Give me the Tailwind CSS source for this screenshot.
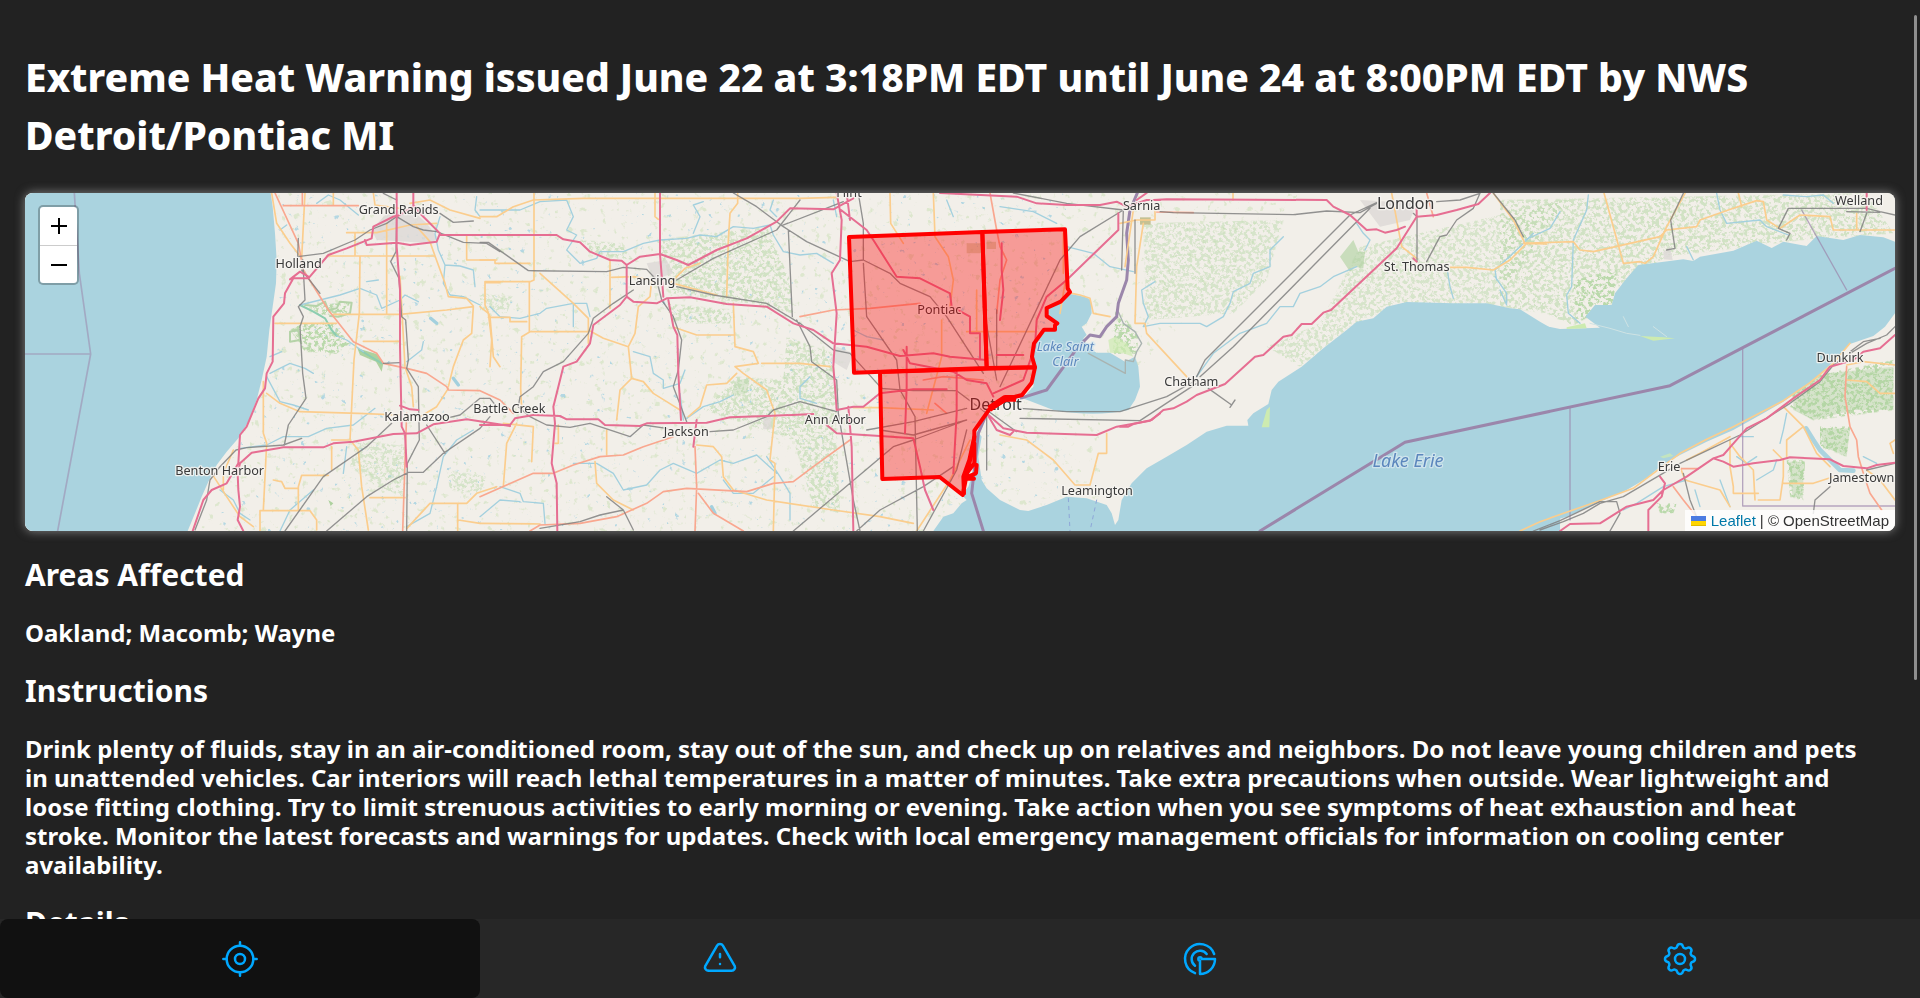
<!DOCTYPE html>
<html lang="en">
<head>
<meta charset="utf-8">
<meta name="viewport" content="width=device-width, initial-scale=1">
<title>Extreme Heat Warning</title>
<script src="https://cdn.jsdelivr.net/npm/@tailwindcss/browser@4"></script>
</head>
<body class="bg-[#222222] text-white font-['Noto_Sans',sans-serif]">
<div class="relative flex h-screen flex-col overflow-hidden">

<main class="min-h-0 flex-1 overflow-y-auto px-[25px] pt-12 [scrollbar-width:none]">
  <h1 class="text-[39px] leading-[58px] font-extrabold">Extreme Heat Warning issued June 22 at 3:18PM EDT until June 24 at 8:00PM EDT by NWS Detroit/Pontiac MI</h1>

  <section aria-label="Warning area map" class="relative mt-[29px] h-[338px] overflow-hidden rounded-lg bg-[#f2efe9] shadow-[0_0_10px_1px_#777777]">
    <svg class="block h-full w-full" viewBox="75 39 5610 1014" preserveAspectRatio="xMidYMid slice" fill="none" stroke-linejoin="round" stroke-linecap="round" role="img" aria-label="Oakland, Macomb and Wayne counties">
      <defs>
        <filter id="woods" x="0" y="0" width="1" height="1" color-interpolation-filters="sRGB">
          <feTurbulence type="fractalNoise" baseFrequency=".09" numOctaves="3" seed="7"/>
          <feColorMatrix values="0 0 0 0 .73  0 0 0 0 .85  0 0 0 0 .67  7 0 0 0 -3.2"/>
          <feComposite in2="SourceGraphic" operator="in"/>
        </filter>
        <filter id="ponds" x="0" y="0" width="1" height="1" color-interpolation-filters="sRGB">
          <feTurbulence type="fractalNoise" baseFrequency=".05" numOctaves="3" seed="21"/>
          <feColorMatrix values="0 0 0 0 .64  0 0 0 0 .82  0 0 0 0 .88  10 0 0 0 -7.3"/>
          <feComposite in2="SourceGraphic" operator="in"/>
        </filter>
        <filter id="meadow" x="0" y="0" width="1" height="1" color-interpolation-filters="sRGB">
          <feTurbulence type="fractalNoise" baseFrequency=".05" numOctaves="3" seed="3"/>
          <feColorMatrix values="0 0 0 0 .8  0 0 0 0 .88  0 0 0 0 .72  8 0 0 0 -5.2"/>
          <feComposite in2="SourceGraphic" operator="in"/>
        </filter>
      </defs>
      <path fill="#f2efe9" d="M75 39H5685V1053H75z"/>

      <!-- vegetation and small lakes -->
      <g filter="url(#meadow)"><path fill="#000" fill-opacity=".55" d="M830 39H3900L3300 700 3300 1053H600L830 500z"/></g>
      <g filter="url(#ponds)"><path fill="#000" fill-opacity=".8" d="M830 39H3200V1053H600L830 500z"/></g>
      <g filter="url(#woods)" fill="#000">
        <path opacity=".6" d="M1970 180 2300 140 2370 300 2380 400 2250 370 2020 340zM2000 370 2200 390 2190 430 2020 430zM1740 180 1860 190 1900 240 1780 220zM2360 470 2500 520 2520 1000 2440 980 2380 780 2110 690 2210 590 2350 600z"/>
        <path opacity=".5" d="M1070 780 1220 800 1210 950 1130 920 1050 860zM1340 870 1460 890 1440 940 1350 930zM1440 340 1540 350 1520 400 1440 390z"/>
        <path opacity=".5" d="M3430 130 3850 120 3800 300 3700 400 3440 420zM3800 500 3960 430 4080 200 4700 60 4480 380 4200 370 4050 440 3900 560z"/>
        <path d="M870 450 905 430 1000 430 1050 490 1010 520 915 515zM930 380 1050 365 1040 400 960 405zM3345 395 3380 420 3415 470 3410 520 3340 520z"/>
        <path opacity=".6" d="M4500 60 5600 40 5680 160 5400 180 5000 230 4840 330 4720 440 4640 400 4500 380z"/>
        <path d="M4720 300 4850 270 4840 370 4730 430zM5380 600 5680 540 5680 690 5440 720 5370 680zM5460 740 5550 740 5540 830 5460 800zM5360 840 5415 840 5410 960 5370 950zM4970 970 5030 970 5020 1000 4980 1000z"/>
      </g>
      <g fill="#add19e">
        <path d="M5380 610 5480 580 5680 560V690L5560 690 5440 720 5380 690zM5460 745 5550 745 5540 830 5470 800zM5365 845 5412 845 5408 955 5378 950z" fill-opacity=".4"/>
        <path d="M4020 230 4060 180 4075 215 4095 215 4090 265 4065 260 4050 275z" fill-opacity=".6"/>
        <path d="M2210 600 2250 595 2240 640 2190 650z" fill-opacity=".3"/>
        <path d="M985 960 1000 970 992 978zM1130 522 1150 550 1145 575 1128 545 1080 525 1072 505z"/>
      </g>
      <g stroke="#b5d3a8" stroke-width="6">
        <path d="M915 375 950 378 975 365 985 390 1010 385 1020 365 1055 368 1050 400 1015 410 990 408M870 455 895 450 900 480 870 485z"/>
        <path stroke="#8ccdb0" d="M900 375 940 395 975 415 995 450 1010 468M1080 510 1145 550"/>
      </g>
      <g fill="#dcd8d6">
        <path d="M1160 100 1230 85 1280 130 1310 170 1300 190 1130 180 1115 150zM1940 250 2000 240 2020 280 1960 300zM4080 60 4250 70 4230 120 4140 140zM2290 710h24v38h-24zM4990 215 5010 200 5018 240 4992 238zM2510 500 2560 520 2540 570 2490 540z" fill-opacity=".8"/>
        <path fill="#c5c193" d="M3420 112h32v22h-32z"/>
        <path fill="#c5c193" fill-opacity=".6" d="M2900 190h50v30h-50zM2960 185h28v22h-28z"/>
      </g>

      <!-- rivers -->
      <g stroke="#a3d0de" stroke-width="4">
        <path d="M950 70 985 45 1020 60 1050 85 1075 105M840 150 860 135M1320 110 1305 160 1315 210 1335 255 1330 310 1350 345 1390 350 1440 375M1335 255 1380 258 1420 270 1425 320M900 375 960 360 1020 345 1080 325 1130 345 1145 385 1200 360 1215 345 1255 365M1100 305 1135 300M1010 468 1040 480 1090 515M810 580 870 550 915 565 940 580M810 530 845 515M800 590 840 665 880 675 925 690M720 805 800 795 850 770 925 770 980 745 1060 735 1125 685M660 930 700 960 720 1000 750 1020M840 1053 870 990 940 930M1030 880 1040 800M1220 1040 1290 1000 1310 920 1330 830 1370 780 1420 750M1270 485 1265 510 1220 545M1430 50 1425 90 1440 110"/>
        <path d="M1440 90 1560 90 1620 65 1700 60 1720 110 1700 150 1730 165 1700 210 1740 250 1790 235 1800 215 1870 215 1930 190 1980 180 2060 175 2100 165 2150 170 2200 140 2260 145 2310 135 2320 165 2350 215 2400 225 2450 220 2500 250M2110 65 2080 75 2100 110 2080 160M2320 60 2310 90 2330 110M1900 515 1950 530 1960 580 1990 600 1990 625 2040 610 2055 570M1470 380 1500 410 1560 415 1620 400 1640 385 1720 370 1760 370 1770 410M1720 370 1720 440M2040 640 2050 720M2060 715 2110 680 2160 665 2200 645M1500 920 1560 940 1570 965 1630 970 1635 1030M1560 965 1500 960 1440 1010M1720 850 1790 850 1840 880 1870 930 1940 915 1980 870 2020 850 2090 880 2160 840 2200 850 2270 825 2330 880M2170 900 2200 940 2260 940 2320 890M2300 830 2340 890 2370 940 2370 1020M2430 590 2400 620 2400 655 2450 670"/>
        <path d="M2500 60 2510 110M2840 60 2860 110M3000 80 3100 95 3170 130M3200 200 3280 220 3330 260 3400 275M2560 450 2600 470 2650 480"/>
        <path d="M3465 305 3425 330 3430 370 3445 410 3430 440 3480 430 3600 430 3620 440 3670 410 3690 370 3700 335 3750 310 3760 280 3810 260 3810 210 3850 170M3590 590 3640 520 3720 460 3800 430 3840 380 3880 380 3900 340 3960 320 4000 290 4070 260M4070 130 4090 160 4110 180 4095 210M4340 260 4350 320 4360 355M4490 300 4485 270 4560 200 4600 160M4485 290 4520 340 4520 370"/>
        <path d="M4575 180 4650 145 4680 95M4765 45 4760 90 4720 180 4715 320 4700 345 4705 400 4740 430M5150 40 5160 90 5180 130 5280 120 5300 140 5365 165M4500 330 4520 375M5060 200 5080 240M5350 45 5420 50 5470 45 5500 70M5360 700 5350 750 5340 790M5220 770 5260 770M5210 830 5240 850 5270 830M5270 900 5320 870 5330 840M5085 930 5100 980M4870 990 4910 970 4990 920 5060 900M5590 830 5630 850M5160 900 5190 980"/>
        <path stroke="#aad3df" stroke-width="14" d="M5418 745 5440 780 5460 810 5490 840 5520 870 5560 872"/>
        <path stroke-width="10" d="M1292 415 1310 430M1360 595 1375 615M2135 980 2145 1000"/>
      </g>

      <!-- lakes -->
      <g fill="#aad3df">
        <path d="M75 39H812L818 80 825 160 830 240 828 310 818 380 808 450 800 530 785 600 770 660 745 725 715 775 680 815 650 855 625 905 605 950 585 1000 563 1053H75z"/>
        <path transform="translate(2460)" d="M750 342C770 345 805 350 813 362L815 400 800 430 785 440 800 465 790 475 805 505 830 518 870 518 915 545 945 530 955 560 960 620 945 660 925 690C860 705 780 705 700 690L608 655 640 620 645 560 635 520 640 490 670 450 708 450 715 430 680 408 680 385 720 368z"/>
        <path transform="translate(3360)" d="M-560 1053-530 1010-500 1000-475 970-460 960-475 945-455 920-440 880-435 830-430 750-415 770-425 830-415 900-400 925-360 960-300 990-275 993-220 975-160 950-100 955-40 975-25 1000-15 1035-5 1020 5 960 35 910 80 865 140 830 200 795 260 755 320 737 385 737 382 720 400 700 445 672 455 630 475 605 545 560 610 505 680 450 710 425 760 415 800 380 860 366 1000 370 1100 370 1170 385 1200 388 1260 425 1320 460V1053z"/>
        <path transform="translate(4500)" d="M0 380 60 395 120 435 180 447 300 443 256 410 285 375 335 375 345 340 380 295 415 255 480 247 550 238 580 243 600 230 700 212 770 182 815 204 850 185 920 198 950 168 1030 180 1080 165 1150 172 1185 185V400L1155 440 1120 468 1050 492 990 555 930 610 850 665 790 700 700 750 620 785 540 825 480 860 440 895 380 930 290 970 200 1010 60 1053H0z"/>
      </g>
      <g fill="#cdebb0">
        <path d="M3785 742 3800 690 3810 680 3808 742zM4920 468 4990 472 5025 475 4960 482zM4700 442 4755 430 4760 445 4700 447z"/>
        <path fill-opacity=".7" d="M3325 480 3345 470 3380 490 3400 530 3370 520 3330 518zM4980 830 5010 820 5020 828 4990 835z"/>
      </g>
      <path stroke="#cfe3e4" stroke-width="3" d="M4770 430 4830 445 4880 460 4920 466M4870 410 4885 440M4960 440 5000 470"/>
      <path stroke="#a9b3b0" stroke-width="4" d="M3265 520 3376 580 3376 540 3400 545 3410 515 3425 490 3405 455 3370 430 3355 395"/>

      <!-- state and national borders -->
      <g stroke="#9b86ab">
        <path stroke-width="5" stroke-opacity=".55" d="M223 39 238 280 272 522 173 1053M75 522H272"/>
        <path stroke-width="4" stroke-opacity=".7" d="M4710 680V1020M5228 505V978H5685M5405 90 5540 330"/>
        <path stroke-width="9" d="M3412 39 3390 90 3380 160 3385 240 3380 300 3355 370 3350 410 3320 440 3300 470 3270 465 3235 500 3140 630 3060 655 2990 665 2960 700 2935 760 2925 850 2915 940 2950 1053M3780 1053 4215 787 5010 617 5230 502 5685 265"/>
      </g>

      <!-- secondary roads -->
      <g stroke="#fbcd8d" stroke-width="5">
        <path d="M815 39 830 130 870 190 905 235 915 39M1000 39V75M1120 39 1125 75 1200 85M1230 70 1290 60 1350 90 1440 115M1040 158H1130L1230 135 1310 130M1065 160V225M1160 130V400M980 228H1305L1290 185 1250 140M1080 230 1078 400 1062 540 1050 780 1075 810 1085 920 1105 1050M1000 403H1200L1340 390 1420 380 1415 460 1390 480 1360 560 1345 620M825 430H1010M1090 484H1200M1305 228 1335 310 1345 350 1400 355 1420 378M1200 290 1215 560 1235 620 1240 680M1400 165V240H1490M1500 308H1455V375L1470 410 1480 530 1500 560M790 605V760L800 790 790 990M800 640 840 670 900 695 1075 700 1200 705M1345 625 1310 680 1260 710M635 880 680 950 720 1010 760 1040M670 930V880L700 810M985 886H905L895 920V990M820 900 845 905 855 925H895M780 1053V992H930L950 1020V1050M995 800V870M1045 780H995M1220 1046 1290 970H1400L1430 940 1490 920M1373 970V1053M1375 1020 1440 1030M1110 953H1215"/>
        <path d="M1440 110H1490L1540 80 1600 60 1750 55H2400L2510 52M1602 39V300L1590 305H1455M1440 240H1485V250H1590M1620 280 1720 370 1765 415V490M1588 305V455H1765M2022 442 2090 465H2205M1590 455 1565 470 1562 625 1565 690M1830 240V385M1835 292 1900 290 1955 300 1950 350 1915 380 1905 460 1885 500 1895 595 1860 630 1850 720M1765 450 1810 475 1885 500M1895 595 1930 605 1960 640 2000 665 2040 690M1965 39V110L1975 118M2213 39V70L2190 100 2185 180 2180 350M2010 310 2055 265 2100 250M2200 370 2205 500 2260 515 2275 550 2205 560 2230 580 2300 630 2325 700 2310 840 2325 850 2320 1053M2285 550 2400 550 2490 560M2210 580 2180 610 2120 615 2100 680 2065 710M1440 380 1465 400 1475 480 1470 560M1465 412H1530V425H1580M2020 310 2150 345M1510 920 1520 790 1550 730M1595 845 1600 740 1510 730M1820 750V825M1785 845 1790 910 1840 960 1900 990M2090 795 2140 800 2165 830 2170 890 2200 930 2300 960 2500 990 2640 1010 2740 1030M1440 1030 1620 1032M1675 735V790H1665M2560 683H2640L2800 690"/>
        <path d="M2670 39 2672 130 2710 190M2800 39 2805 170 2845 230 2860 300 2850 380M3215 340 3240 345 3270 355 3280 400 3330 410M3400 90 3375 260M3430 130 3410 260 3405 430 3435 430 3440 460 3560 590M3000 765 3080 780 3160 840 3225 915 3270 915 3295 820H3320V760M2825 420V530L2780 700M2900 455H3110M2930 330V460M3200 280 3180 400M3190 160V280M2750 1053 2850 900 2910 780"/>
        <path d="M3360 130 3410 120H3465V90M4175 39 4205 200 4250 235M4350 262H4400L4480 270 4530 240 4580 190 4640 192M4480 40 4540 120 4575 190M3699 39V60"/>
        <path d="M4570 190 4720 185 4740 210 4780 215 4980 170 5000 150 5090 140 5100 120 5200 85 5270 62 5290 65 5300 120 5340 145 5400 105 5490 110 5500 150 5685 150M4812 39 4870 250 4920 245 4935 250 4960 230 5000 140 5055 40M5215 39 5225 80M5570 100V150M5550 490 5500 550 5430 608 5350 662 5200 740 5120 778 5040 820 4900 925 4790 965 4620 1025 4560 1053M5350 680 5410 740 5450 820 5490 860M5410 740 5360 780V830M5190 780 5190 860 5200 920 5200 940 5275 940M5190 790 5220 830 5260 870 5265 960M5320 810 5350 840 5350 890 5340 960H5275M5350 910H5440L5500 890M5040 860 5055 900 5160 930 5190 980M5060 840 5100 820 5190 770M5540 555 5590 545 5685 555M5540 600 5600 605 5640 640 5685 640M5600 870 5640 900 5685 960M5685 780 5670 790 5680 820"/>
      </g>

      <!-- primary roads -->
      <g stroke="#f9a78f" stroke-width="5">
        <path d="M907 39V75M850 77H1075M825 39 895 190 910 270 985 390 1060 485 1130 520 1150 550 1220 565 1280 580 1340 620 1345 630 1440 632 1500 660 1540 700M1208 1053 1220 700"/>
        <path d="M1590 1053 1620 1035 1740 1030 1850 1010 1940 970 1990 935 2060 925 2240 935 2320 910 2380 905 2440 860 2550 780M1440 950 1600 880 1660 880 1720 855 1800 830 1870 825 1930 800 2020 770M2085 800 2090 920 2085 1053M2095 940 2140 1000 2230 1053M2400 410 2500 390 2610 385 2760 370M2970 39 2990 150 3000 200 3020 240 3000 300 2990 400M2770 600 2830 590 2950 600M2805 670 2840 700"/>
        <path d="M4280 39 4300 110M3470 96 3580 98M5540 560 5535 650 5550 740 5570 780 5575 830 5590 880 5610 940 5645 990M5020 920 5050 960 5090 1010M5040 866H5095"/>
      </g>

      <!-- railways -->
      <g stroke="#808080" stroke-width="4" stroke-opacity=".85">
        <path d="M895 175 893 230 970 220 1065 180 1110 150 1160 130 1190 110M905 270 960 340M908 238 915 360 895 380 910 410 900 440 908 580 918 655 865 735 853 795 740 803 708 810 660 860 630 900 620 960 585 1050M1190 110 1188 215 1172 245 1197 295 1205 410 1217 420 1225 540 1220 565 1255 620 1258 780 1222 850 1220 1053M1190 110 1240 140 1270 150 1310 155 1390 187 1460 190 1500 215M1320 100 1360 127 1420 123M1150 40 1190 60M855 1053 970 890 1100 800 1175 730M980 1053 1100 950 1180 900 1225 877H1270L1330 820 1440 745 1470 710M1280 735 1335 820M1350 712 1380 705 1440 655 1470 655 1490 680M850 795 905 775M1150 550 1200 548"/>
        <path d="M1440 187H1465L1585 272 1820 275 1870 262 1940 268 1970 300 1985 360 2020 410 2045 480 2035 570 2020 620 2060 725M1900 330 1840 370 1780 415 1765 460 1690 545 1630 575 1600 620 1560 650 1555 680 1590 710 1640 735 1710 742 1770 730 1890 770 1930 735 2000 745M2130 755 2200 750 2300 710 2320 690 2400 665 2510 695M2030 300 2140 235 2330 150 2400 60M2345 137 2530 65M2200 39 2270 80 2350 140 2420 185 2550 245 2590 240 2670 280 2700 310 2790 350 2840 410 2950 580M2365 150 2377 410M2030 320 2140 345 2300 370 2400 430 2500 510 2550 520 2640 620M2390 420 2430 500 2435 545 2510 600 2515 700 2560 960 2580 1053M1620 1045 1740 1025 1800 1005 1870 990 1900 1050M1820 950 1870 990M2575 40 2590 130 2590 240M2590 250 2600 410 2690 540 2700 630 2745 710 2752 1053M2640 625 2740 632H2870L2960 700M2600 750 2740 725 2900 685M2640 750 2740 765 2900 720M2380 1053 2550 910 2680 800 2740 780 2900 720M2570 1053 2640 990 2770 920 2860 860M2770 1053 2870 870 2900 750M2950 380 2990 600M2990 390V560"/>
        <path d="M3000 620 3180 240 3240 170 3370 90M3370 90 3200 70 3040 39M3370 90 3365 270M3405 120 3405 280M2960 690 3050 755M3060 685 3200 695 3360 695 3500 650 3590 600M3060 715 3420 722 3590 610M2960 700V870M3480 95 3520 98 3880 104 3980 93 4080 98 4130 70M3590 590 3615 540 4050 105 4130 68M3600 590 3700 500 4110 85M3625 625 3695 675M3690 682 3705 660M4240 100 4251 110V245M4280 245 4320 170 4340 165 4370 120 4420 85 4440 40M4310 65 4380 60 4440 40"/>
        <path d="M4480 39 4545 120 4570 170M5050 40 5012 120 5025 205 5000 210M5335 145 5365 85H5600L5640 95 5685 105M5335 145 5370 160 5360 180M5540 95 5640 97M5600 100 5580 155M5685 440 5660 465 5600 490 5550 520 5500 555 5460 605 5370 670 5220 765 5040 850 4870 950 4800 970 4750 1000 4690 1025 4620 1050M5640 475 5590 485 5550 515M4600 1053 4680 1022 4800 965 4850 965 4860 1000 4830 1053M5050 880 5070 960 5090 1010M5440 1000 5445 960 5490 920M5600 870 5685 850"/>
      </g>

      <!-- motorways -->
      <g stroke="#e66e92" stroke-width="6">
        <path d="M578 1053 610 960 635 930 680 910 715 850 720 765 740 740 775 655 795 625 800 580 818 545 820 410 852 370 855 340 880 295 925 295 985 225 1040 205 1115 175 1120 140 1190 105M870 298 900 275 925 290M1190 39 1190 200 1200 330 1200 500 1205 740 1215 760 1220 860M1240 39V80L1190 110M1240 75 1265 105 1320 160 1310 185 1230 195 1190 188 1100 195 1095 180M1320 165H1500M720 850 755 818 850 802 970 802 1000 790 1060 785 1180 762 1250 760 1300 733 1400 718 1530 738M720 850 713 880 715 930 720 980 713 1020 730 1053M1200 677 1230 688 1255 690"/>
        <path d="M1440 165H1670L1690 178 1740 187 1770 215 1830 240 1865 242 1880 255V350L1860 375 1780 435 1770 490 1730 545 1690 560 1675 620 1660 680 1665 730 1655 850 1670 910 1672 1053M1440 735H1530L1545 715 1600 705 1680 708 1700 718H1795L1815 735 1920 738 1940 730 2120 728 2190 712 2300 708 2440 702M1880 255 1920 230 1980 222 2030 240 2065 255 2150 210 2240 175 2330 125 2370 85 2500 88 2560 55M1980 39V222L1990 350M1880 350 1900 365 1970 370 2000 355 2070 352 2180 372 2300 380 2380 430 2440 450 2500 490 2600 500 2700 528 2800 520 2850 530 2960 540M2005 360 2020 440 2032 465 2035 580 2043 720M2510 39 2525 120 2520 240 2495 280 2510 400 2500 560 2505 620 2510 690 2560 680 2590 680 2640 640 2740 628H2840M2090 720 2080 800M2545 680 2555 800 2560 1053M2480 735 2510 760 2640 768 2740 775 2760 860 2775 930 2800 990M2523 90 2600 150 2620 180 2690 290 2760 295 2850 340 2855 380 2910 410V460H2940L2940 540M2540 39 2550 120M2710 510 2730 550 2860 575 2900 600 2960 610 2980 650M2720 500V620L2715 760M2870 575V700L2860 880"/>
        <path d="M2820 39 3050 50 3110 70 3200 75 3300 75 3350 65 3380 80 3440 60H3480M3355 100V150L3200 300 3140 350 3110 420 3105 500 3070 600 2980 640M2960 700 2990 750 3030 765 3040 755M2960 700 3010 745 3080 758 3290 765 3350 740 3450 722 3480 700M3440 39 3410 60M3005 190V270L3010 330 3000 420M2990 525H3070"/>
        <path d="M3360 740H3385L3400 732 3455 720 3490 690 3520 685 3560 665 3590 645 3675 612 3765 530 3790 525 3850 470 3875 465 3905 432H3935L3970 398 3993 390 4190 205 4250 110 4310 105 4370 90 4435 72 4470 39M3460 60 3500 58 3980 60 4000 80 4050 105 4100 150 4130 148 4155 158 4190 150 4215 140M4250 110 4250 85M4240 235 4250 245"/>
        <path d="M5685 465 5640 505 5590 515 5560 540 5490 560 5460 600 5380 655 5300 715 5240 745 5170 825 5140 835 5060 890 4990 930 4960 960 4880 980 4800 1030 4710 1032 4680 1053M5140 835 5170 845 5200 860 5260 850 5340 840 5370 832 5490 838 5530 858 5600 865 5630 855 5685 848M4980 890 4995 910 4985 950 4945 990V1053M5600 39V90"/>
      </g>

      <g stroke="#8ea6d8" stroke-width="3" stroke-dasharray="10 14"><path d="M3205 955 3210 1053M3290 960 3270 1053"/></g>

      <!-- place names -->
      <g fill="#3a3a3a" stroke="#f7f5f1" stroke-width="8" stroke-opacity=".85" paint-order="stroke" text-anchor="middle" font-size="38">
        <text x="1196" y="101">Grand Rapids</text>
        <text x="896" y="264">Holland</text>
        <text x="659" y="886">Benton Harbor</text>
        <text x="1251" y="724">Kalamazoo</text>
        <text x="1528" y="698">Battle Creek</text>
        <text x="1956" y="315">Lansing</text>
        <text x="2059" y="768">Jackson</text>
        <text x="2506" y="733">Ann Arbor</text>
        <text x="2547" y="51">Flint</text>
        <text x="2818" y="401">Pontiac</text>
        <text x="2987" y="690" font-size="48">Detroit</text>
        <text x="3425" y="90">Sarnia</text>
        <text x="3291" y="944">Leamington</text>
        <text x="3574" y="619">Chatham</text>
        <text x="4217" y="86" font-size="48">London</text>
        <text x="4250" y="273">St. Thomas</text>
        <text x="5577" y="75">Welland</text>
        <text x="5520" y="545">Dunkirk</text>
        <text x="5007" y="872">Erie</text>
        <text x="5585" y="906">Jamestown</text>
        <g fill="#5c87bd" stroke="#d5e6ee" font-style="italic">
          <text x="3196" y="514">Lake Saint</text>
          <text x="3196" y="558">Clair</text>
          <text x="4224" y="861" font-size="54">Lake Erie</text>
        </g>
      </g>

      <!-- warned counties -->
      <g transform="translate(2460)" fill="#ff0000" fill-opacity=".35" stroke="#ff0000" stroke-width="12">
        <path d="M87 171 487 156 500 564 102 578z"/>
        <path d="M487 156 735 148 743 325 750 336 722 365 680 384V408L712 430 705 436V449H672L642 490 636 530 645 562 500 564z"/>
        <path d="M180 576 645 562 635 608 606 645 560 657 508 688 463 752V775L455 820 440 885 428 945 359 891 187 897z"/>
        <path d="M463 770 448 840 430 890 432 940M463 790V850L440 880M470 855 468 880 430 896H462" stroke-linejoin="bevel"/>
        <path d="M508 686 555 655H588" stroke-width="20" fill="none" stroke-linecap="butt"/>
      </g>
    </svg>

    <div class="absolute top-3 left-[13px] flex flex-col overflow-hidden rounded-[5px] border-2 border-black/25 bg-white bg-clip-padding text-black">
      <button type="button" aria-label="Zoom in" class="flex h-[39px] w-[37px] items-center justify-center border-b border-[#cccccc]"><svg class="size-4" viewBox="0 0 16 16" stroke="currentColor" stroke-width="2" aria-hidden="true"><path d="M0 8h16M8 0v16"/></svg></button>
      <button type="button" aria-label="Zoom out" class="flex h-[37px] w-[37px] items-center justify-center"><svg class="size-4" viewBox="0 0 16 16" stroke="currentColor" stroke-width="2" aria-hidden="true"><path d="M0 8h16"/></svg></button>
    </div>

    <div class="absolute right-0 bottom-0 flex items-center gap-1 bg-white/80 px-[6px] font-['Liberation_Sans',Arial,sans-serif] text-[15px] leading-[21px] text-[#333333]">
      <a href="#" class="flex items-center gap-[5px] text-[#0078a8]"><svg class="h-[10px] w-[15px]" viewBox="0 0 15 10" aria-hidden="true"><path fill="#4c7be1" d="M0 0h15v5H0z"/><path fill="#ffd500" d="M0 5h15v4H0z"/><path fill="#e0bc00" d="M0 9h15v1H0z"/></svg>Leaflet</a>
      <span>| © OpenStreetMap</span>
    </div>
  </section>

  <h2 class="mt-[26px] text-[30px] leading-9 font-bold">Areas Affected</h2>
  <p class="mt-[25px] text-2xl leading-[29px] font-bold">Oakland; Macomb; Wayne</p>
  <h2 class="mt-[26px] text-[30px] leading-9 font-bold">Instructions</h2>
  <p class="mt-[25px] pr-6 text-2xl leading-[29px] font-bold">Drink plenty of fluids, stay in an air-conditioned room, stay out of the sun, and check up on relatives and neighbors. Do not leave young children and pets in unattended vehicles. Car interiors will reach lethal temperatures in a matter of minutes. Take extra precautions when outside. Wear lightweight and loose fitting clothing. Try to limit strenuous activities to early morning or evening. Take action when you see symptoms of heat exhaustion and heat stroke. Monitor the latest forecasts and warnings for updates. Check with local emergency management officials for information on cooling center availability.</p>
  <h2 class="mt-[26px] text-[30px] leading-9 font-bold">Details</h2>
</main>

<div aria-hidden="true" class="absolute top-[15px] right-[3px] h-[665px] w-[3px] rounded-full bg-[#8f8f8f]"></div>

<nav aria-label="Main" class="grid h-[79px] shrink-0 grid-cols-4 bg-[#272727] text-[#00a8ff]">
  <button type="button" aria-label="Current location" aria-current="page" class="flex items-center justify-center rounded-lg bg-[#111111]">
    <svg class="size-10" viewBox="0 0 24 24" fill="none" stroke="currentColor" stroke-width="1.5" stroke-linecap="round" stroke-linejoin="round"><circle cx="12" cy="12" r="3"/><circle cx="12" cy="12" r="8"/><path d="M12 2v2M12 20v2M20 12h2M2 12h2"/></svg>
  </button>
  <button type="button" aria-label="Alerts" class="flex items-center justify-center">
    <svg class="size-10" viewBox="0 0 24 24" fill="none" stroke="currentColor" stroke-width="1.5" stroke-linecap="round" stroke-linejoin="round"><path d="M12 9v2m0 4v.01M5 19h14a2 2 0 0 0 1.84-2.75l-7.1-12.25a2 2 0 0 0-3.5 0l-7.1 12.25a2 2 0 0 0 1.75 2.75"/></svg>
  </button>
  <button type="button" aria-label="Radar" class="flex items-center justify-center">
    <svg class="size-10" viewBox="0 0 24 24" fill="none" stroke="currentColor" stroke-width="1.5" stroke-linecap="round" stroke-linejoin="round"><path d="M21 12h-8a1 1 0 1 0-1 1v8a9 9 0 0 0 9-9M16 9a5 5 0 1 0-7 7M20.486 9a9 9 0 1 0-11.482 11.495"/></svg>
  </button>
  <button type="button" aria-label="Settings" class="flex items-center justify-center">
    <svg class="size-10" viewBox="0 0 24 24" fill="none" stroke="currentColor" stroke-width="1.5" stroke-linecap="round" stroke-linejoin="round"><path d="M10.325 4.317c.426-1.756 2.924-1.756 3.35 0a1.724 1.724 0 0 0 2.573 1.066c1.543-.94 3.31.826 2.37 2.37a1.724 1.724 0 0 0 1.065 2.572c1.756.426 1.756 2.924 0 3.35a1.724 1.724 0 0 0-1.066 2.573c.94 1.543-.826 3.31-2.37 2.37a1.724 1.724 0 0 0-2.572 1.065c-.426 1.756-2.924 1.756-3.35 0a1.724 1.724 0 0 0-2.573-1.066c-1.543.94-3.31-.826-2.37-2.37a1.724 1.724 0 0 0-1.065-2.572c-1.756-.426-1.756-2.924 0-3.35a1.724 1.724 0 0 0 1.066-2.573c-.94-1.543.826-3.31 2.37-2.37 1 .608 2.296.07 2.572-1.065z"/><circle cx="12" cy="12" r="3"/></svg>
  </button>
</nav>
</div>
</body>
</html>
